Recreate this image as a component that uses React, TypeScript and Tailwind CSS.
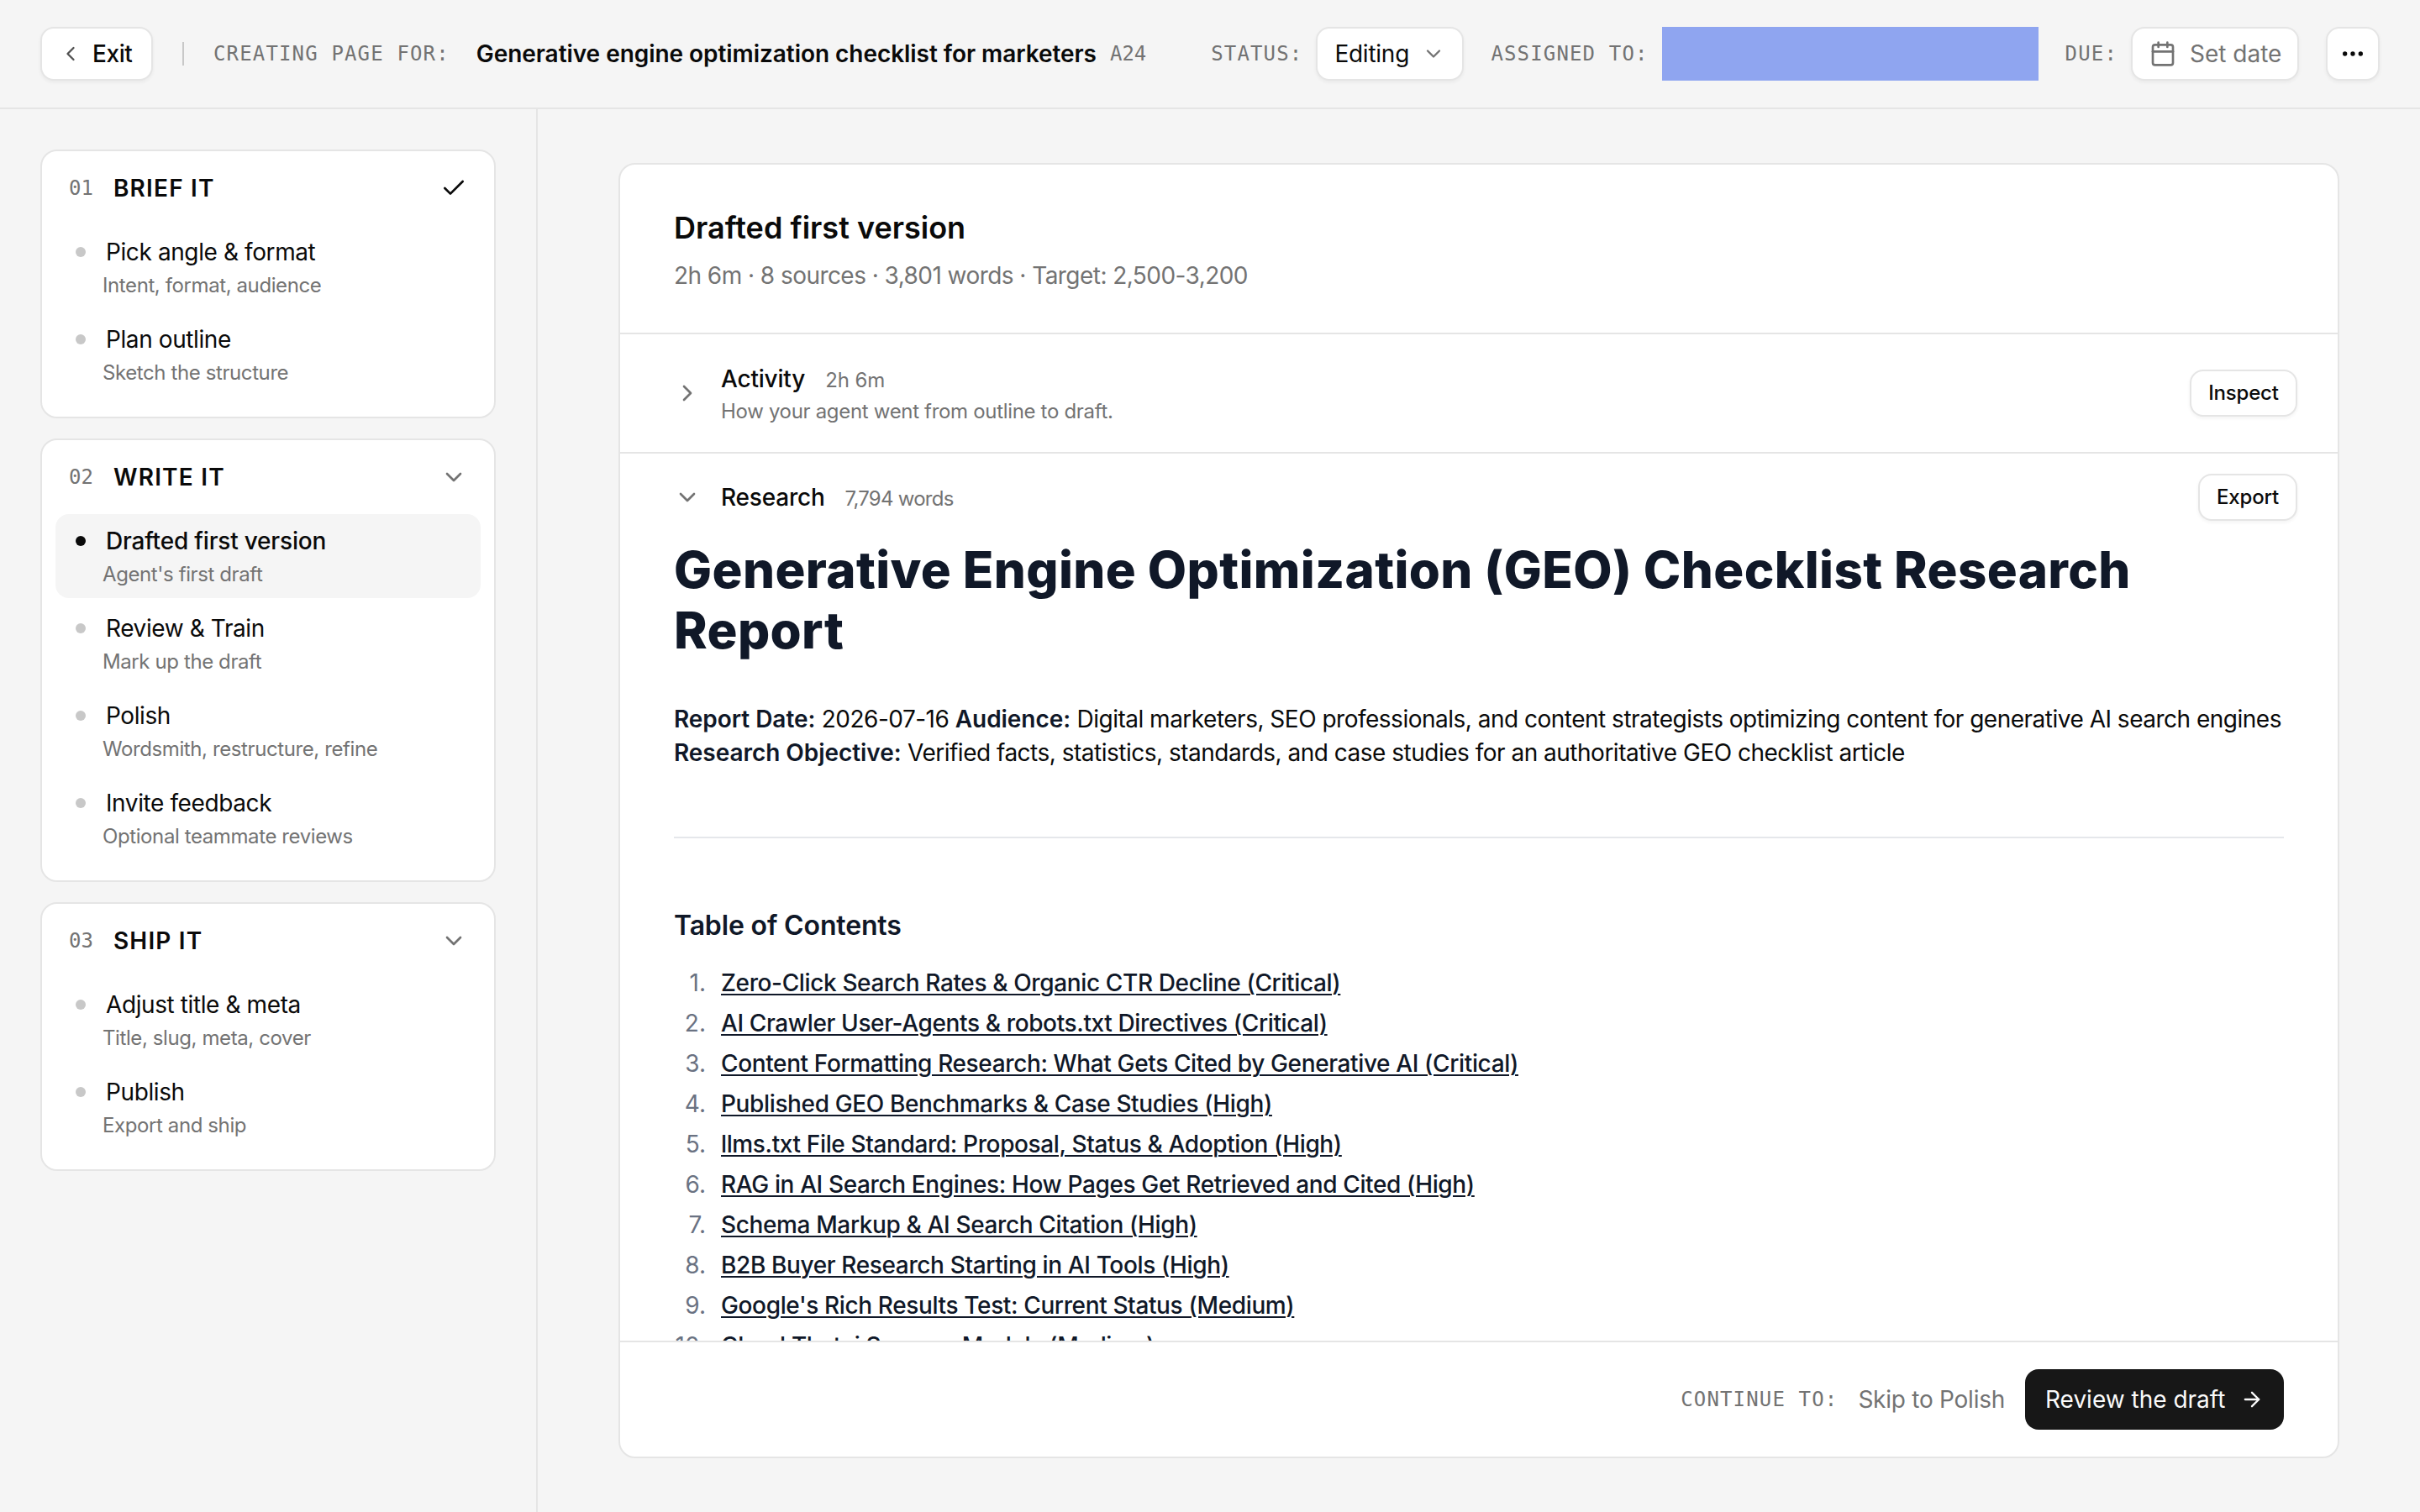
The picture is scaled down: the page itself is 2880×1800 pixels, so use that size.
import { useState } from 'react';
import {
    ArrowRight,
    Calendar,
    Check,
    ChevronDown,
    ChevronLeft,
    ChevronRight,
    Ellipsis,
} from 'lucide-react';

interface Step {
    title: string;
    hint: string;
}

interface Phase {
    number: string;
    name: string;
    done?: boolean;
    steps: Step[];
}

const PHASES: Phase[] = [
    {
        number: '01',
        name: 'BRIEF IT',
        done: true,
        steps: [
            { title: 'Pick angle & format', hint: 'Intent, format, audience' },
            { title: 'Plan outline', hint: 'Sketch the structure' },
        ],
    },
    {
        number: '02',
        name: 'WRITE IT',
        steps: [
            { title: 'Drafted first version', hint: "Agent's first draft" },
            { title: 'Review & Train', hint: 'Mark up the draft' },
            { title: 'Polish', hint: 'Wordsmith, restructure, refine' },
            { title: 'Invite feedback', hint: 'Optional teammate reviews' },
        ],
    },
    {
        number: '03',
        name: 'SHIP IT',
        steps: [
            { title: 'Adjust title & meta', hint: 'Title, slug, meta, cover' },
            { title: 'Publish', hint: 'Export and ship' },
        ],
    },
];

const CONTENTS = [
    'Zero-Click Search Rates & Organic CTR Decline (Critical)',
    'AI Crawler User-Agents & robots.txt Directives (Critical)',
    'Content Formatting Research: What Gets Cited by Generative AI (Critical)',
    'Published GEO Benchmarks & Case Studies (High)',
    'llms.txt File Standard: Proposal, Status & Adoption (High)',
    'RAG in AI Search Engines: How Pages Get Retrieved and Cited (High)',
    'Schema Markup & AI Search Citation (High)',
    'B2B Buyer Research Starting in AI Tools (High)',
    "Google's Rich Results Test: Current Status (Medium)",
    'Cloud Thatai Sonoma Models (Medium)',
];

const MONO = "font-['DejaVu_Sans_Mono',monospace] text-[24px] text-[#737373]";
const BUTTON = 'flex items-center rounded-2xl border-2 border-[#e5e5e5] bg-white shadow-[0_2px_4px_rgba(0,0,0,0.05)]';
const STRONG = 'font-semibold tracking-[-0.05px] text-[#101828]';

function TopBar() {
    return (
        <header className="flex h-[130px] shrink-0 items-center border-b-2 border-[#e5e5e5] px-12 text-[28px]">
            <button type="button" className={`${BUTTON} h-16 w-[134px] gap-3 pl-5 font-medium tracking-[-0.4px]`}>
                <ChevronLeft className="size-7 text-[#525252]" />
                Exit
            </button>
            <span className="ml-[35px] h-7 w-[2px] bg-[#c8c8c8]" />
            <span className={`${MONO} ml-[35px] tracking-[1.15px]`}>CREATING PAGE FOR:</span>
            <span className="ml-8 font-semibold tracking-[-0.05px]">
                Generative engine optimization checklist for marketers
            </span>
            <span className={`${MONO} ml-4`}>A24</span>

            <div className="ml-auto flex items-center">
                <span className={`${MONO} tracking-[1.15px]`}>STATUS:</span>
                <button type="button" className={`${BUTTON} ml-4 h-16 w-[176px] justify-between pr-5 pl-5 tracking-[-0.25px]`}>
                    Editing
                    <ChevronDown className="size-7 text-[#737373]" />
                </button>
                <span className={`${MONO} ml-8 tracking-[1.15px]`}>ASSIGNED TO:</span>
                <span className="ml-4 h-16 w-[448px] bg-[#8fa5f0]" />
                <span className={`${MONO} ml-8 tracking-[1.15px]`}>DUE:</span>
                <button type="button" className={`${BUTTON} ml-4 h-16 w-[200px] gap-4 pl-5 text-[#737373]`}>
                    <Calendar className="size-8" />
                    Set date
                </button>
                <button type="button" className={`${BUTTON} ml-8 size-16 justify-center`}>
                    <Ellipsis className="size-8" />
                </button>
            </div>
        </header>
    );
}

function PhaseCard({ phase, active, onSelect }: { phase: Phase; active: string; onSelect: (title: string) => void }) {
    return (
        <section className="rounded-[20px] border-2 border-[#e5e5e5] bg-white px-4 pb-6">
            <div className="flex h-[88px] items-center px-4">
                <span className={MONO}>{phase.number}</span>
                <h2 className="ml-6 text-[28px] font-semibold tracking-[1.2px]">{phase.name}</h2>
                {phase.done ? (
                    <Check className="ml-auto size-8" />
                ) : (
                    <ChevronDown className="ml-auto size-8 text-[#737373]" />
                )}
            </div>
            <ul className="flex flex-col gap-1">
                {phase.steps.map((step) => {
                    const current = step.title === active;
                    return (
                        <li
                            key={step.title}
                            onClick={() => onSelect(step.title)}
                            className={`h-[100px] rounded-2xl px-6 pt-3 ${current ? 'bg-[#f5f5f5]' : ''}`}
                        >
                            <div className="flex h-10 items-center gap-6">
                                <span className={`size-3 rounded-full ${current ? 'bg-[#0a0a0a]' : 'bg-[#c8c8c8]'}`} />
                                <span className={`text-[28px] ${current ? 'font-medium tracking-[-0.2px]' : 'tracking-[-0.4px]'}`}>
                                    {step.title}
                                </span>
                            </div>
                            <p className="pl-8 text-[24px] leading-10 tracking-[-0.4px] text-[#737373]">{step.hint}</p>
                        </li>
                    );
                })}
            </ul>
        </section>
    );
}

function Report() {
    return (
        <article className="px-16 text-[28px] leading-10">
            <h1 className="-mt-0.5 text-[60px] leading-[72px] font-extrabold tracking-[0.38px] text-[#101828]">
                Generative Engine Optimization (GEO) Checklist Research
                <br />
                Report
            </h1>
            <p className="mt-[50px] tracking-[-0.5px] whitespace-nowrap">
                <strong className={STRONG}>Report Date:</strong> 2026-07-16{' '}
                <strong className={STRONG}>Audience:</strong> Digital marketers, SEO professionals, and content
                strategists optimizing content for generative AI search engines
                <br />
                <strong className={STRONG}>Research Objective:</strong> Verified facts, statistics, standards, and
                case studies for an authoritative GEO checklist article
            </p>
            <hr className="mt-20 border-t-2 border-[#e5e7eb]" />
            <h3 className="mt-20 text-[32px] leading-[48px] font-semibold tracking-[-0.15px] text-[#101828]">
                Table of Contents
            </h3>
            <ol className="mt-5">
                {CONTENTS.map((entry, i) => (
                    <li key={entry} className="flex h-12 items-center">
                        <span className="w-[38px] shrink-0 text-right text-[#6a7282]">{i + 1}.</span>
                        <a className="ml-[18px] font-medium tracking-[-0.37px] whitespace-nowrap text-[#101828] underline decoration-2 underline-offset-3">
                            {entry}
                        </a>
                    </li>
                ))}
            </ol>
        </article>
    );
}

export default function App() {
    const [active, setActive] = useState('Drafted first version');

    return (
        <div className="flex h-[1800px] w-[2880px] flex-col overflow-hidden bg-[#f5f5f5] font-['Inter',sans-serif] text-[#0a0a0a]">
            <TopBar />
            <div className="flex min-h-0 flex-1">
                <aside className="flex w-[640px] shrink-0 flex-col gap-6 border-r-2 border-[#e5e5e5] px-12 pt-12">
                    {PHASES.map((phase) => (
                        <PhaseCard key={phase.number} phase={phase} active={active} onSelect={setActive} />
                    ))}
                </aside>

                <main className="min-w-0 flex-1 px-24 py-16">
                    <div className="flex h-full flex-col overflow-hidden rounded-[20px] border-2 border-[#e5e5e5] bg-white">
                        <div className="h-[202px] shrink-0 border-b-2 border-[#e5e5e5] px-16 pt-[49px]">
                            <h2 className="text-[36px] leading-[52px] font-semibold">Drafted first version</h2>
                            <p className="mt-[11px] text-[28px] leading-10 tracking-[-0.55px] text-[#737373]">
                                2h 6m · 8 sources · 3,801 words · Target: 2,500-3,200
                            </p>
                        </div>

                        {/* Collapsed activity log */}
                        <div className="flex h-[142px] shrink-0 items-center border-b-2 border-[#e5e5e5] pr-12 pl-16">
                            <ChevronRight className="size-8 text-[#737373]" />
                            <div className="ml-6 pt-1">
                                <div className="flex h-[39px] items-baseline gap-6 leading-10">
                                    <span className="text-[28px] font-medium tracking-[-0.2px]">Activity</span>
                                    <span className="text-[24px] tracking-[-0.1px] text-[#737373]">2h 6m</span>
                                </div>
                                <p className="text-[24px] leading-10 tracking-[-0.32px] text-[#737373]">
                                    How your agent went from outline to draft.
                                </p>
                            </div>
                            <button type="button" className={`${BUTTON} ml-auto h-14 w-32 justify-center text-[24px] font-medium tracking-[-0.2px]`}>
                                Inspect
                            </button>
                        </div>

                        {/* Expanded research report, cut off by the footer */}
                        <div className="min-h-0 flex-1 overflow-hidden">
                            <div className="flex h-[104px] items-center pr-12 pl-16">
                                <ChevronDown className="size-8 text-[#737373]" />
                                <div className="ml-6 flex items-baseline gap-6 pt-0.5 leading-10">
                                    <span className="text-[28px] font-medium tracking-[-0.2px]">Research</span>
                                    <span className="text-[24px] tracking-[-0.75px] text-[#737373]">7,794 words</span>
                                </div>
                                <button type="button" className={`${BUTTON} ml-auto h-14 w-[118px] justify-center text-[24px] font-medium tracking-[-0.2px]`}>
                                    Export
                                </button>
                            </div>
                            <Report />
                        </div>

                        <div className="flex h-[138px] shrink-0 items-center justify-end border-t-2 border-[#e5e5e5] px-16 text-[28px]">
                            <span className={`${MONO} tracking-[1.15px]`}>CONTINUE TO:</span>
                            <span className="ml-6 tracking-[-0.25px] text-[#737373]">Skip to Polish</span>
                            <button type="button" className="ml-6 flex h-[72px] w-[308px] items-center justify-between rounded-2xl bg-[#171717] px-6 text-[#fafafa]">
                                Review the draft
                                <ArrowRight className="size-7" />
                            </button>
                        </div>
                    </div>
                </main>
            </div>
        </div>
    );
}
